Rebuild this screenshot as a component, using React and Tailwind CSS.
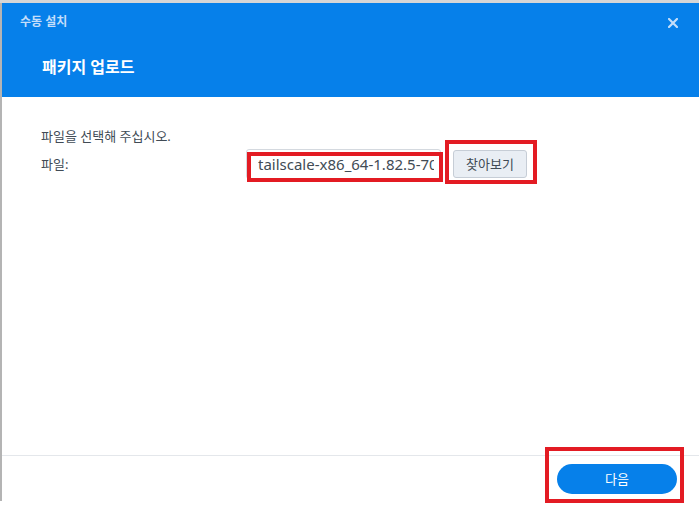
import React from "react";

export default function App() {
  const font = { fontFamily: '"Noto Sans", "Noto Sans CJK KR", sans-serif' };
  return (
    <div className="relative w-[699px] h-[505px] bg-white overflow-hidden" style={font}>
      <div className="h-[3px] bg-[#d6d6d6]" />
      <div className="flex flex-col h-[498px] border-l-2 border-[#b4b4b4]">
        {/* Header */}
        <div className="h-[94px] bg-[#0680ea] pl-[18px] pr-[21px] pt-[11px] flex flex-col">
          <div className="flex items-center justify-between h-[16px]">
            <span className="text-[12px] leading-[16px] font-bold text-[#c4defa]">수동 설치</span>
            <svg width="10" height="10" viewBox="0 0 10 10" className="mt-[1px]">
              <path d="M1 1 L9 9 M9 1 L1 9" stroke="#c4defa" strokeWidth="2.2" strokeLinecap="square" />
            </svg>
          </div>
          <div className="mt-[26px] pl-[22px] text-[16px] leading-[22px] font-bold text-white">패키지 업로드</div>
        </div>

        {/* Body */}
        <div className="flex-1 pl-[39px] pt-[29px]">
          <div className="text-[13px] leading-[20px] text-[#414b55]">파일을 선택해 주십시오.</div>
          <div className="mt-[3px] flex items-center h-[30px]">
            <div className="w-[205px] text-[13px] leading-[20px] text-[#414b55]">파일:</div>
            <div className="w-[195px] h-[30px] border border-[#d4d9df] rounded-[3px] pl-[11px] flex items-center">
              <div className="w-[176px] overflow-hidden">
                <span className="text-[15px] leading-[20px] text-[#414b55] whitespace-nowrap">tailscale-x86_64-1.82.5-70</span>
              </div>
            </div>
            <button className="ml-[12px] w-[74px] h-[28px] rounded-[3px] border border-[#c6cdd6] bg-[#e9eef4] text-[13px] leading-[20px] text-[#414b55]">
              찾아보기
            </button>
          </div>
        </div>

        {/* Footer */}
        <div className="h-[46px] border-t border-[#e4e7eb] flex justify-end pr-[22px] pt-[8px]">
          <button className="w-[120px] h-[30px] rounded-full bg-[#0680ea] text-white text-[13px] leading-[20px]">
            다음
          </button>
        </div>
      </div>

      {/* Red annotation boxes */}
      <div className="absolute left-[247px] top-[152px] w-[196px] h-[30px] border-4 border-[#e31b23]" />
      <div className="absolute left-[445px] top-[140px] w-[92px] h-[44px] border-4 border-[#e31b23]" />
      <div className="absolute left-[545px] top-[447px] w-[139px] h-[56px] border-4 border-[#e31b23]" />
    </div>
  );
}
